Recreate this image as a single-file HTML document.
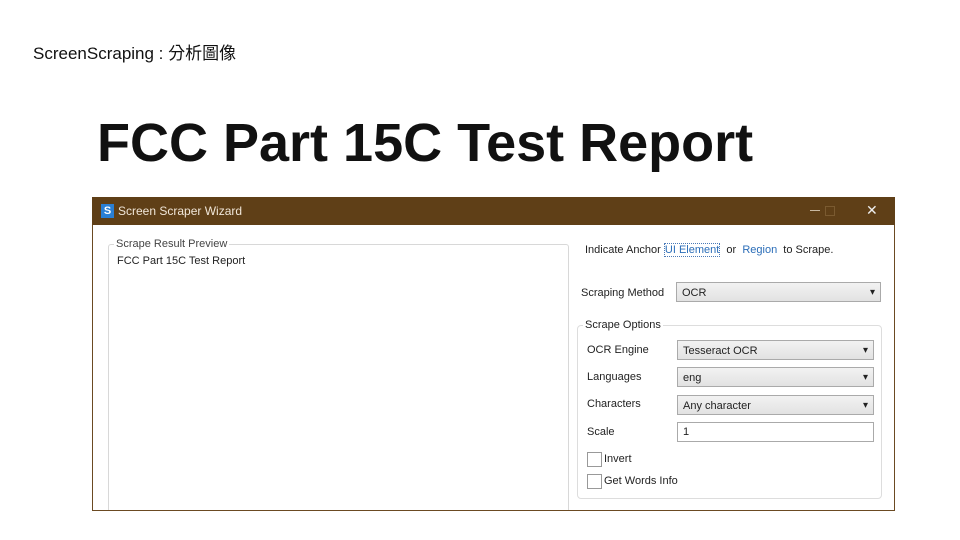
<!DOCTYPE html>
<html><head><meta charset="utf-8"><style>
body{margin:0;width:960px;height:540px;background:#fff;position:relative;overflow:hidden;font-family:"Liberation Sans","Noto Sans CJK TC",sans-serif;}
.a{position:absolute;}
.s{font-size:11px;color:#222;}
.dd{position:absolute;height:20px;border:1px solid #aaa;background:linear-gradient(#f2f2f2,#e2e2e2);font-size:11px;line-height:20px;padding-left:5px;box-sizing:border-box;color:#222}
.dd:after{content:"▾";position:absolute;right:5px;top:0;font-size:10px}
.cb{position:absolute;width:13px;height:13px;border:1px solid #999;background:#fff}
</style></head><body>
<div class="a" style="left:33px;top:39px;font-size:17px;color:#111">ScreenScraping : 分析圖像</div>
<div class="a" style="left:97px;top:112px;font-size:54px;font-weight:bold;color:#111">FCC Part 15C Test Report</div>
<div class="a" style="left:92px;top:197px;width:803px;height:314px;background:#fff;border:1px solid #6b4a22;border-top:none;box-sizing:border-box;overflow:hidden">
<div class="a" style="left:15px;top:47px;width:459px;height:300px;border:1px solid #d8d8d8;border-radius:3px"></div>
</div>
<div class="a" style="left:92px;top:197px;width:803px;height:28px;background:#5f3f17"></div>
<div class="a" style="left:101px;top:204px;width:13px;height:14px;background:#2a7fd4;color:#fff;font-size:11px;font-weight:bold;text-align:center;line-height:14px">S</div>
<div class="a" style="left:118px;top:204px;font-size:12px;color:#f0e6d8">Screen Scraper Wizard</div>
<div class="a" style="left:810px;top:210px;width:10px;height:1px;background:#c8b8a0"></div>
<div class="a" style="left:825px;top:206px;width:8px;height:8px;border:1px solid #7a5a30"></div>
<div class="a" style="left:866px;top:202px;font-size:14px;color:#eee">✕</div>
<div class="a s" style="left:114px;top:238px;background:#fff;padding:0 2px;color:#444">Scrape Result Preview</div>
<div class="a s" style="left:117px;top:255px">FCC Part 15C Test Report</div>
<div class="a s" style="left:585px;top:244px">Indicate Anchor <span style="color:#2a6db8;border:1px dotted #4a7ab8">UI Element</span> &nbsp;or &nbsp;<span style="color:#2a6db8">Region</span> &nbsp;to Scrape.</div>
<div class="a s" style="left:581px;top:287px">Scraping Method</div>
<div class="dd" style="left:676px;top:282px;width:205px">OCR</div>
<div class="a" style="left:577px;top:325px;width:303px;height:172px;border:1px solid #ddd;border-radius:4px"></div>
<div class="a s" style="left:583px;top:319px;background:#fff;padding:0 2px">Scrape Options</div>
<div class="a s" style="left:587px;top:344px">OCR Engine</div>
<div class="dd" style="left:677px;top:340px;width:197px">Tesseract OCR</div>
<div class="a s" style="left:587px;top:371px">Languages</div>
<div class="dd" style="left:677px;top:367px;width:197px">eng</div>
<div class="a s" style="left:587px;top:398px">Characters</div>
<div class="dd" style="left:677px;top:395px;width:197px">Any character</div>
<div class="a s" style="left:587px;top:426px">Scale</div>
<div class="a s" style="left:677px;top:422px;width:197px;height:20px;border:1px solid #aaa;box-sizing:border-box;padding-left:5px;line-height:18px">1</div>
<div class="cb" style="left:587px;top:452px"></div>
<div class="a s" style="left:604px;top:453px">Invert</div>
<div class="cb" style="left:587px;top:474px"></div>
<div class="a s" style="left:604px;top:475px">Get Words Info</div>
</body></html>
